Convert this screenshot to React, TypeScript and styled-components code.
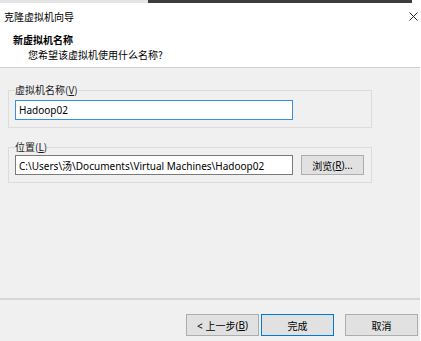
import React from "react";
import styled, { createGlobalStyle } from "styled-components";

const Global = createGlobalStyle`
  html, body { margin: 0; padding: 0; background: #ffffff; }
  body { font-family: "Noto Sans", "Noto Sans CJK SC", sans-serif; font-size: 10px; color: #000; }
  * { box-sizing: border-box; }
`;

const Window = styled.div`
  width: 421px;
  height: 341px;
  display: flex;
  flex-direction: column;
  border-right: 1px solid #ffffff;
  overflow: hidden;
`;

const TopStrip = styled.div`
  height: 3px;
  display: flex;
  flex: none;
`;

const StripPart = styled.div<{ $w: number; $c: string }>`
  width: ${(p) => p.$w}px;
  background: ${(p) => p.$c};
`;

const TitleBar = styled.div`
  height: 26px;
  flex: none;
  background: #fff;
  display: flex;
  align-items: center;
  justify-content: space-between;
  padding: 0 3px 0 4px;
  font-family: "Noto Sans CJK SC", sans-serif;
  font-size: 10px;
`;

const CloseBtn = styled.div`
  width: 10px;
  height: 10px;
  display: flex;
  align-items: center;
  justify-content: center;
  margin-right: -1px;
`;

const Header = styled.div`
  flex: none;
  height: 39px;
  background: #fff;
  border-bottom: 1px solid #cfcfcf;
  padding: 5px 0 0 13px;
  display: flex;
  flex-direction: column;
  font-family: "Noto Sans CJK SC", sans-serif;
`;

const HeaderTitle = styled.div`
  font-weight: 700;
  font-size: 10px;
  line-height: 12px;
`;

const HeaderSub = styled.div`
  font-size: 10px;
  line-height: 12px;
  margin-top: 3px;
  padding-left: 15px;
`;

const Body = styled.div`
  flex: 1;
  background: #f0f0f0;
  padding: 16px 0 0 8px;
  border-bottom: 2px solid #d6d6d6;
`;

const Group = styled.fieldset<{ $mt: number }>`
  width: 364px;
  margin: ${(p) => p.$mt}px 0 0 0;
  padding: 0 6px 7px 6px;
  border: 1px solid #dcdcdc;
  min-width: 0;
`;

const Legend = styled.legend`
  padding: 0;
  font-family: "Noto Sans CJK SC", sans-serif;
  font-size: 10px;
  line-height: 12px;
  color: #1a1a1a;
`;

const U = styled.span`
  text-decoration: underline;
`;

const Row = styled.div<{ $mt: number }>`
  display: flex;
  align-items: center;
  gap: 8px;
  margin-top: ${(p) => p.$mt}px;
`;

const TextBox = styled.div<{ $focus?: boolean }>`
  width: 278px;
  height: 20px;
  background: #fff;
  border: 1px solid ${(p) => (p.$focus ? "#3a8ee0" : "#7a7a7a")};
  display: flex;
  align-items: center;
  padding-left: 3px;
  font-family: "Noto Sans", "Noto Sans CJK SC", sans-serif;
  font-size: 10px;
  white-space: nowrap;
`;

const Button = styled.div<{ $w: number; $default?: boolean }>`
  width: ${(p) => p.$w}px;
  height: 20px;
  background: #e1e1e1;
  border: 1px solid ${(p) => (p.$default ? "#0078d7" : "#adadad")};
  display: flex;
  align-items: center;
  justify-content: center;
  font-family: "Noto Sans", "Noto Sans CJK SC", sans-serif;
  font-size: 10px;
  white-space: nowrap;
`;

const Footer = styled.div`
  flex: none;
  height: 41px;
  background: #f0f0f0;
  display: flex;
  justify-content: flex-end;
  align-items: flex-start;
  padding: 14px 2px 0 0;
`;

const FooterBtn = styled(Button)<{ $ml: number }>`
  height: 22px;
  margin-left: ${(p) => p.$ml}px;
`;

export default function App() {
  return (
    <>
      <Global />
      <Window>
        <TopStrip>
          <StripPart $w={148} $c="#e4e4e4" />
          <StripPart $w={265} $c="#3c3c3c" />
          <StripPart $w={8} $c="#ffffff" />
        </TopStrip>
        <TitleBar>
          <span>克隆虚拟机向导</span>
          <CloseBtn>
            <svg width="9" height="9" viewBox="0 0 9 9">
              <path d="M0.5 0.5 L8.5 8.5 M8.5 0.5 L0.5 8.5" stroke="#222" strokeWidth="1" />
            </svg>
          </CloseBtn>
        </TitleBar>
        <Header>
          <HeaderTitle>新虚拟机名称</HeaderTitle>
          <HeaderSub>您希望该虚拟机使用什么名称?</HeaderSub>
        </Header>
        <Body>
          <Group $mt={0}>
            <Legend>
              虚拟机名称(<U>V</U>)
            </Legend>
            <Row $mt={4}>
              <TextBox $focus>Hadoop02</TextBox>
            </Row>
          </Group>
          <Group $mt={13}>
            <Legend>
              位置(<U>L</U>)
            </Legend>
            <Row $mt={2}>
              <TextBox>C:\Users\汤\Documents\Virtual Machines\Hadoop02</TextBox>
              <Button $w={63}>
                浏览(<U>R</U>)...
              </Button>
            </Row>
          </Group>
        </Body>
        <Footer>
          <FooterBtn $w={73} $ml={0}>
            &lt; 上一步(<U>B</U>)
          </FooterBtn>
          <FooterBtn $w={73} $ml={2} $default>
            完成
          </FooterBtn>
          <FooterBtn $w={73} $ml={11}>
            取消
          </FooterBtn>
        </Footer>
      </Window>
    </>
  );
}
